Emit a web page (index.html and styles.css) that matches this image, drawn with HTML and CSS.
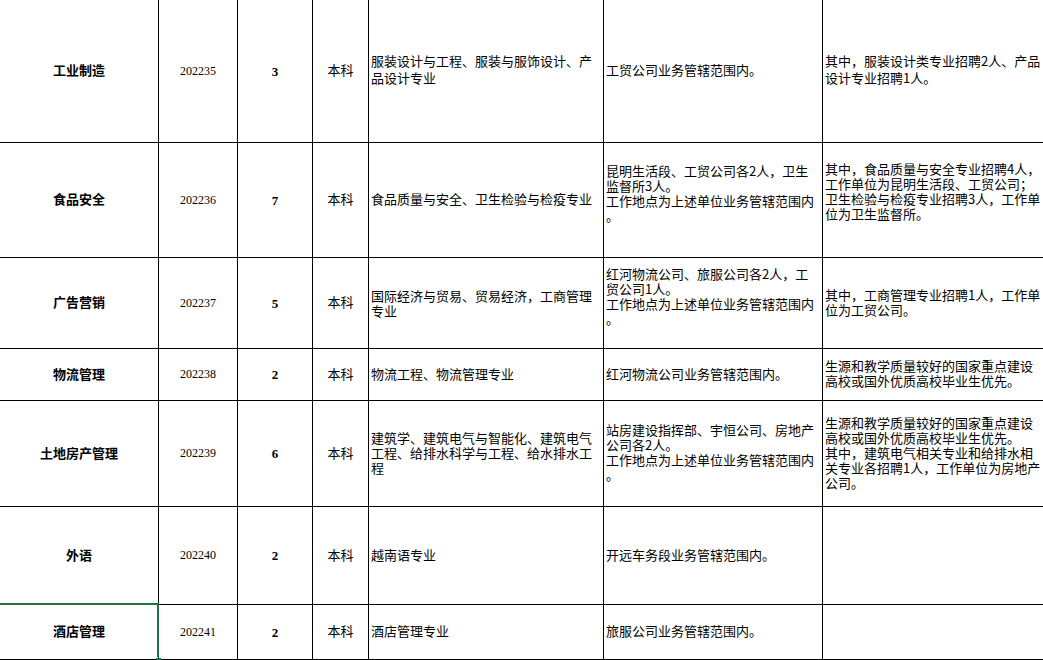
FILE: index.html
```html
<!DOCTYPE html>
<html lang="zh-CN">
<head>
<meta charset="utf-8">
<title>招聘岗位表</title>
<link rel="stylesheet" href="styles.css">
</head>
<body>
<div class="sheet">
  <div class="c name r1">工业制造</div>
  <div class="c code r1">202235</div>
  <div class="c num r1">3</div>
  <div class="c edu r1">本科</div>
  <div class="c txt r1 loose">服装设计与工程、服装与服饰设计、产<br>品设计专业</div>
  <div class="c txt r1">工贸公司业务管辖范围内。</div>
  <div class="c txt r1 loose">其中，服装设计类专业招聘2人、产品<br>设计专业招聘1人。</div>

  <div class="c name r2">食品安全</div>
  <div class="c code r2">202236</div>
  <div class="c num r2">7</div>
  <div class="c edu r2">本科</div>
  <div class="c txt r2">食品质量与安全、卫生检验与检疫专业</div>
  <div class="c txt r2 up">昆明生活段、工贸公司各2人，卫生<br>监督所3人。<br>工作地点为上述单位业务管辖范围内<br>。</div>
  <div class="c txt r2 up2">其中，食品质量与安全专业招聘4人，<br>工作单位为昆明生活段、工贸公司；<br>卫生检验与检疫专业招聘3人，工作单<br>位为卫生监督所。</div>

  <div class="c name r3">广告营销</div>
  <div class="c code r3">202237</div>
  <div class="c num r3">5</div>
  <div class="c edu r3">本科</div>
  <div class="c txt r3 down">国际经济与贸易、贸易经济，工商管理<br>专业</div>
  <div class="c txt r3 up">红河物流公司、旅服公司各2人，工<br>贸公司1人。<br>工作地点为上述单位业务管辖范围内<br>。</div>
  <div class="c txt r3">其中，工商管理专业招聘1人，工作单<br>位为工贸公司。</div>

  <div class="c name r4">物流管理</div>
  <div class="c code r4">202238</div>
  <div class="c num r4">2</div>
  <div class="c edu r4">本科</div>
  <div class="c txt r4">物流工程、物流管理专业</div>
  <div class="c txt r4">红河物流公司业务管辖范围内。</div>
  <div class="c txt r4">生源和教学质量较好的国家重点建设<br>高校或国外优质高校毕业生优先。</div>

  <div class="c name r5">土地房产管理</div>
  <div class="c code r5">202239</div>
  <div class="c num r5">6</div>
  <div class="c edu r5">本科</div>
  <div class="c txt r5">建筑学、建筑电气与智能化、建筑电气<br>工程、给排水科学与工程、给水排水工<br>程</div>
  <div class="c txt r5">站房建设指挥部、宇恒公司、房地产<br>公司各2人。<br>工作地点为上述单位业务管辖范围内<br>。</div>
  <div class="c txt r5">生源和教学质量较好的国家重点建设<br>高校或国外优质高校毕业生优先。<br>其中，建筑电气相关专业和给排水相<br>关专业各招聘1人，工作单位为房地产<br>公司。</div>

  <div class="c name r6">外语</div>
  <div class="c code r6">202240</div>
  <div class="c num r6">2</div>
  <div class="c edu r6">本科</div>
  <div class="c txt r6">越南语专业</div>
  <div class="c txt r6">开远车务段业务管辖范围内。</div>
  <div class="c txt r6"></div>

  <div class="c name r7 sel">酒店管理</div>
  <div class="c code r7">202241</div>
  <div class="c num r7">2</div>
  <div class="c edu r7">本科</div>
  <div class="c txt r7">酒店管理专业</div>
  <div class="c txt r7">旅服公司业务管辖范围内。</div>
  <div class="c txt r7"></div>
</div>
</body>
</html>
```

FILE: styles.css
```css
html, body {
  margin: 0;
  padding: 0;
  background: #ffffff;
  overflow: hidden;
}

body {
  width: 1043px;
  height: 660px;
  font-family: "Noto Sans CJK SC", "Noto Sans", sans-serif;
  font-size: 13px;
  color: #000000;
}

.sheet {
  display: grid;
  grid-template-columns: 159px 79px 75px 56px 235px 219px 300px;
  grid-template-rows: 143px 115px 91px 52px 106px 98px 55px;
  width: 1223px;
}

.c {
  box-sizing: border-box;
  border-right: 1px solid #000000;
  border-bottom: 1px solid #000000;
  display: flex;
  align-items: center;
  line-height: 15px;
  white-space: nowrap;
  overflow: hidden;
}

.name {
  justify-content: center;
  font-weight: 700;
  font-size: 13px;
  padding-bottom: 3px;
}

.code {
  justify-content: center;
  font-family: "Liberation Serif", "Times New Roman", serif;
  font-size: 12px;
}

.num {
  justify-content: center;
  font-family: "Liberation Serif", "Times New Roman", serif;
  font-weight: 700;
  font-size: 13px;
}

.edu {
  justify-content: center;
  padding-bottom: 3px;
}

.txt {
  justify-content: flex-start;
  padding-left: 2px;
  padding-bottom: 3px;
}

.loose {
  line-height: 16.5px;
}

.up {
  padding-bottom: 15px;
}

.up2 {
  padding-bottom: 19px;
}

.down {
  padding-bottom: 0;
}

.sel {
  position: relative;
  overflow: visible;
}

.sel::before {
  content: "";
  position: absolute;
  left: -3px;
  top: -2px;
  width: 160px;
  height: 52px;
  border-top: 2px solid #217346;
  border-right: 2px solid #217346;
}

.sel::after {
  content: "";
  position: absolute;
  left: 156px;
  top: 53px;
  width: 5px;
  height: 5px;
  background: #217346;
}
```
